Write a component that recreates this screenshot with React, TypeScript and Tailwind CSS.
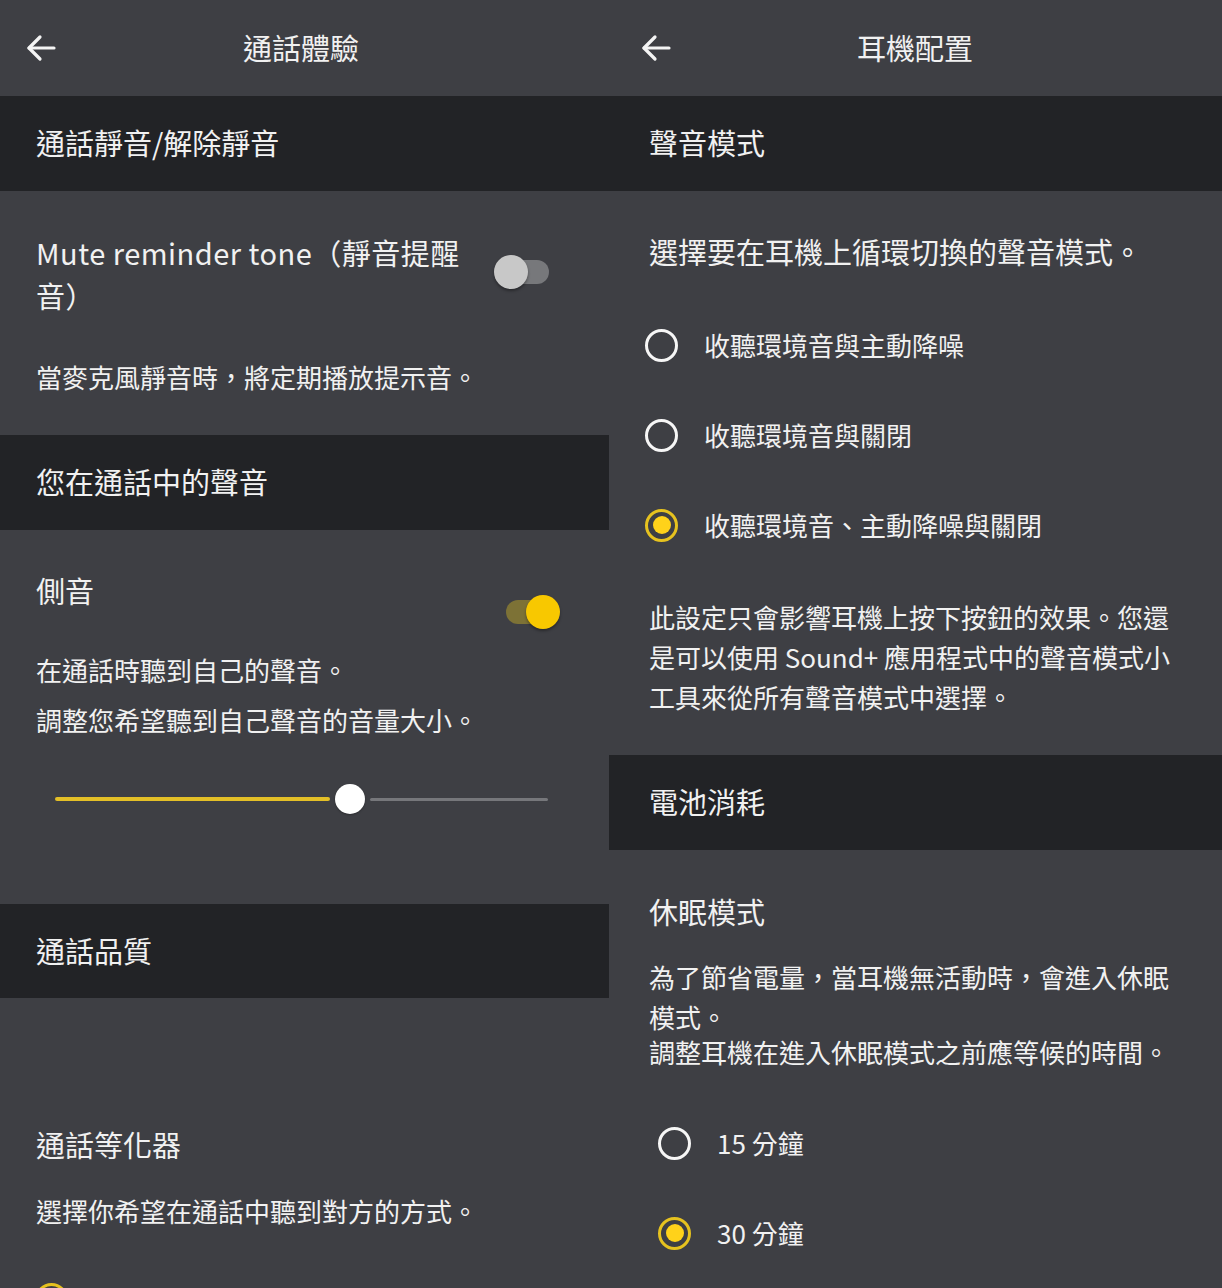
import type { ReactNode } from "react";

function BackArrow() {
  return (
    <svg width="30" height="28" viewBox="0 0 30 28" fill="none" stroke="#f4f4f4" strokeWidth="3.2" strokeLinecap="round" strokeLinejoin="round">
      <path d="M28 14H3" />
      <path d="M14 3L3 14l11 11" />
    </svg>
  );
}

function TopBar({ title, pad }: { title: string; pad: string }) {
  return (
    <div className={`grid h-[96px] shrink-0 grid-cols-[1fr_auto_1fr] items-center ${pad}`}>
      <div className="justify-self-start">
        <BackArrow />
      </div>
      <div className="-mt-[3px] text-[29px] leading-[40px]">{title}</div>
      <div />
    </div>
  );
}

function SectionHeader({ children, px, h = "h-[95px]" }: { children: ReactNode; px: string; h?: string }) {
  return (
    <div className={`flex shrink-0 items-center bg-[#222326] pb-[3px] text-[29px] leading-[40px] ${h} ${px}`}>
      {children}
    </div>
  );
}

function Toggle({ on }: { on: boolean }) {
  if (on) {
    return (
      <div className="relative h-[34px] w-[56px] shrink-0">
        <div className="absolute left-0 top-[5px] h-[24px] w-[48px] rounded-full bg-[#7d7236]" />
        <div className="absolute left-[20px] top-0 h-[34px] w-[34px] rounded-full bg-[#f8c800] shadow-[0_2px_3px_rgba(0,0,0,0.35)]" />
      </div>
    );
  }
  return (
    <div className="relative h-[34px] w-[56px] shrink-0">
      <div className="absolute left-[3px] top-[5px] h-[24px] w-[52px] rounded-full bg-[#77787b]" />
      <div className="absolute left-0 top-0 h-[34px] w-[34px] rounded-full bg-[#c8c8c8] shadow-[0_2px_3px_rgba(0,0,0,0.35)]" />
    </div>
  );
}

function Radio({ checked }: { checked?: boolean }) {
  if (checked) {
    return (
      <span className="flex h-[33px] w-[33px] shrink-0 items-center justify-center rounded-full border-[3.5px] border-[#e6c21f]">
        <span className="h-[18px] w-[18px] rounded-full bg-[#ffd21a]" />
      </span>
    );
  }
  return <span className="h-[33px] w-[33px] shrink-0 rounded-full border-[3.5px] border-[#f6f6f6]" />;
}

function RadioRow({ label, checked, pad }: { label: string; checked?: boolean; pad: string }) {
  return (
    <div className={`flex h-[90px] items-center gap-[26px] ${pad}`}>
      <Radio checked={checked} />
      <span className="whitespace-nowrap text-[26px] leading-[40px]">{label}</span>
    </div>
  );
}

export default function App() {
  return (
    <div className="flex h-[1288px] w-[1222px] overflow-hidden bg-[#3e3f44] font-['Noto_Sans_CJK_TC',sans-serif] text-[#f1f1f1]">
      {/* Left screen: call experience */}
      <div className="flex w-[609px] shrink-0 flex-col">
        <TopBar title="通話體驗" pad="pl-[26px] pr-[33px]" />
        <SectionHeader px="px-[36px]">通話靜音/解除靜音</SectionHeader>

        <div className="h-[244px] shrink-0 pl-[36px] pt-[40px]">
          <div className="flex items-start">
            <div className="whitespace-nowrap text-[29px] leading-[43px] tracking-[0.5px]">
              Mute reminder tone（靜音提醒
              <br />
              音）
            </div>
            <div className="ml-auto mr-[59px] mt-[24px]">
              <Toggle on={false} />
            </div>
          </div>
          <p className="mt-[40px] whitespace-nowrap text-[26px] leading-[40px]">當麥克風靜音時，將定期播放提示音。</p>
        </div>

        <SectionHeader px="px-[36px]">您在通話中的聲音</SectionHeader>

        <div className="h-[374px] shrink-0 pt-[39px]">
          <div className="flex h-[43px] items-start pl-[36px]">
            <div className="text-[29px] leading-[43px]">側音</div>
            <div className="ml-auto mr-[47px] mt-[26px]">
              <Toggle on />
            </div>
          </div>
          <p className="mt-[38px] whitespace-nowrap pl-[36px] text-[26px] leading-[40px]">在通話時聽到自己的聲音。</p>
          <p className="mt-[10px] whitespace-nowrap pl-[36px] text-[26px] leading-[40px]">調整您希望聽到自己聲音的音量大小。</p>
          <div className="mt-[44px] flex h-[30px] items-center pl-[55px] pr-[61px]">
            <div className="h-[4px] w-[275px] rounded-full bg-[#e3bf27]" />
            <div className="ml-[5px] h-[30px] w-[30px] shrink-0 rounded-full bg-white shadow-[0_1px_2px_rgba(0,0,0,0.3)]" />
            <div className="ml-[5px] h-[3px] flex-1 rounded-full bg-[#76777b]" />
          </div>
        </div>

        <SectionHeader px="px-[36px]" h="h-[94px]">通話品質</SectionHeader>

        <div className="shrink-0 pl-[36px] pt-[125px]">
          <div className="text-[29px] leading-[43px]">通話等化器</div>
          <p className="mt-[25px] whitespace-nowrap text-[26px] leading-[40px]">選擇你希望在通話中聽到對方的方式。</p>
          <div className="mt-[52px] -ml-[1px]">
            <Radio checked />
          </div>
        </div>
      </div>

      {/* Right screen: headset configuration */}
      <div className="flex w-[613px] shrink-0 flex-col">
        <TopBar title="耳機配置" pad="pl-[32px] pr-[33px]" />
        <SectionHeader px="px-[40px]">聲音模式</SectionHeader>

        <p className="mt-[40px] whitespace-nowrap pl-[40px] text-[29px] leading-[40px]">選擇要在耳機上循環切換的聲音模式。</p>

        <div className="mt-[29px] flex flex-col">
          <RadioRow pad="pl-[36px]" label="收聽環境音與主動降噪" />
          <RadioRow pad="pl-[36px]" label="收聽環境音與關閉" />
          <RadioRow pad="pl-[36px]" label="收聽環境音、主動降噪與關閉" checked />
        </div>

        <p className="mt-[27px] whitespace-nowrap pl-[40px] text-[26px] leading-[40px]">
          此設定只會影響耳機上按下按鈕的效果。您還
          <br />
          是可以使用 Sound+ 應用程式中的聲音模式小
          <br />
          工具來從所有聲音模式中選擇。
        </p>

        <div className="mt-[38px]">
          <SectionHeader px="px-[40px]">電池消耗</SectionHeader>
        </div>

        <div className="pl-[40px] pt-[41px]">
          <div className="text-[29px] leading-[40px]">休眠模式</div>
          <p className="mt-[26px] whitespace-nowrap text-[26px] leading-[40px]">
            為了節省電量，當耳機無活動時，會進入休眠
            <br />
            模式。
          </p>
          <p className="whitespace-nowrap text-[26px] leading-[30px]">調整耳機在進入休眠模式之前應等候的時間。</p>
        </div>

        <div className="mt-[31px] flex flex-col">
          <RadioRow pad="pl-[49px]" label="15 分鐘" />
          <RadioRow pad="pl-[49px]" label="30 分鐘" checked />
        </div>
      </div>
    </div>
  );
}
